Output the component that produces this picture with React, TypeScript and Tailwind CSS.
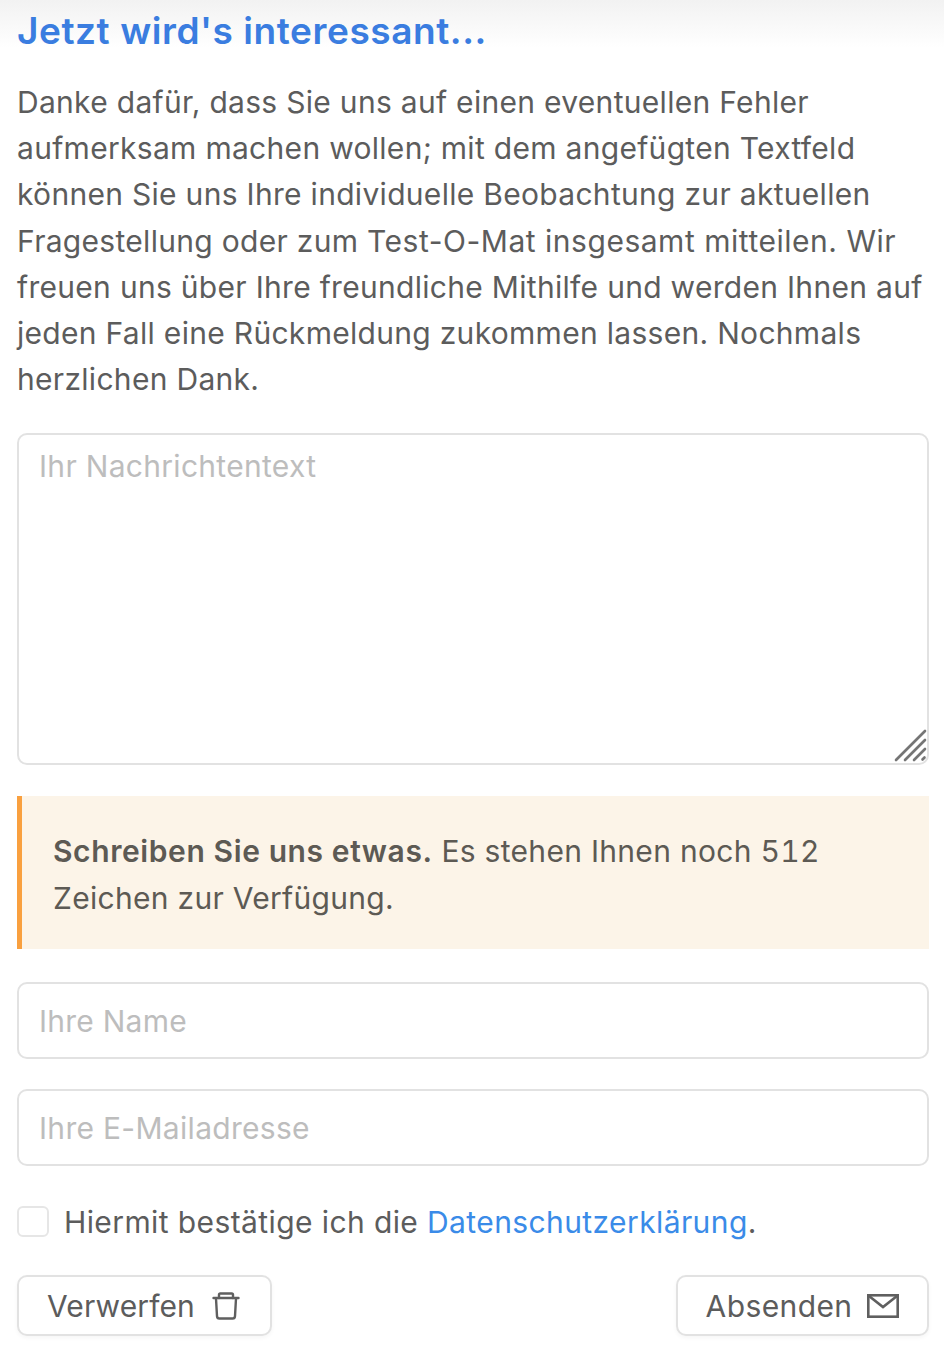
const font = { fontFamily: '"Inter", "Liberation Sans", sans-serif' };

function TrashIcon() {
  return (
    <svg width="28" height="28" viewBox="0 0 28 28" fill="none" stroke="#5f5f5f" strokeWidth="2.4" strokeLinejoin="round" strokeLinecap="round">
      <path d="M1.5 6h25" />
      <path d="M7 6V2.8c0-.7.5-1.3 1.3-1.3h11.4c.8 0 1.3.6 1.3 1.3V6" />
      <path d="M4 6.5l1 17.6c.1 1.4 1 2.4 2.4 2.4h13.2c1.4 0 2.3-1 2.4-2.4l1-17.6" />
    </svg>
  );
}

function MailIcon() {
  return (
    <svg width="32" height="24" viewBox="0 0 32 24" fill="none" stroke="#5f5f5f" strokeWidth="2.6" strokeLinejoin="miter">
      <rect x="1.3" y="1.3" width="29.4" height="21.4" />
      <path d="M2 2l14 11L30 2" />
    </svg>
  );
}

function ResizeHandle() {
  return (
    <svg className="absolute right-[1px] bottom-[2px]" width="34" height="34" viewBox="0 0 34 34" fill="none" stroke="#757575" strokeWidth="2.6" strokeLinecap="round">
      <path d="M2 31L31 2" />
      <path d="M11 31L31 11" />
      <path d="M20 31L31 20" />
      <path d="M28.5 30.5L30.5 28.5" />
    </svg>
  );
}

export default function App() {
  return (
    <div style={font} className="min-h-[1354px] w-[944px] bg-white bg-gradient-to-b from-[#f2f2f2] to-white to-[48px] bg-no-repeat px-[17px] pr-[15px] pt-[6px] text-[#5c5c5c]">
      <h2 className="text-[37px] leading-[50px] font-semibold tracking-[0.57px] text-[#3a7de0]">Jetzt wird's interessant...</h2>
      <p className="mt-[23px] text-[30px] leading-[46.2px] tracking-[0.3px]">
        Danke dafür, dass Sie uns auf einen eventuellen Fehler aufmerksam machen wollen; mit dem angefügten Textfeld können Sie uns Ihre individuelle Beobachtung zur aktuellen Fragestellung oder zum <span className="tracking-[0.52px]">Test-O-Mat insgesamt mitteilen. Wir</span> freuen uns über Ihre freundliche Mithilfe und werden Ihnen auf jeden Fall eine Rückmeldung zukommen lassen. Nochmals herzlichen Dank.
      </p>

      <div className="relative mt-[31px] h-[332px]">
        <textarea
          placeholder="Ihr Nachrichtentext"
          className="h-full w-full resize-none rounded-[10px] border-2 border-[#e2e2e2] px-[20px] py-[11px] text-[30px] leading-[40px] tracking-[0.3px] outline-none placeholder:text-[#bdbdbd]"
        />
        <ResizeHandle />
      </div>

      <div className="mt-[31px] border-l-[5px] border-[#f9a03f] bg-[#fcf4e8] pt-[32px] pr-[32px] pb-[28px] pl-[31px] text-[30px] leading-[46.4px] tracking-[0.3px] text-[#5d5a54]">
        <strong className="font-semibold tracking-[0.6px]">Schreiben Sie uns etwas.</strong> Es stehen Ihnen noch <span className="tabular-nums">512</span> Zeichen zur Verfügung.
      </div>

      <input
        placeholder="Ihre Name"
        className="mt-[33px] block h-[77px] w-full rounded-[10px] border-2 border-[#e2e2e2] px-[20px] text-[30px] tracking-[0.25px] outline-none placeholder:text-[#bdbdbd]"
      />
      <input
        placeholder="Ihre E-Mailadresse"
        className="mt-[30px] block h-[77px] w-full rounded-[10px] border-2 border-[#e2e2e2] px-[20px] text-[30px] tracking-[0.3px] outline-none placeholder:text-[#bdbdbd]"
      />

      <label className="mt-[40px] flex h-[31px] items-center gap-[15px] text-[30px] tracking-[0.4px]">
        <span className="h-[31px] w-[32px] rounded-[6px] border-2 border-[#e6e6e6] bg-white" />
        <span className="pt-[2px]">
          Hiermit bestätige ich die <span className="text-[#3a8be8]">Datenschutzerklärung</span>.
        </span>
      </label>

      <div className="mt-[38px] flex justify-between">
        <button className="flex h-[61px] w-[255px] items-center justify-center gap-[17px] rounded-[10px] border-2 border-[#e2e2e2] bg-white pr-[2px] text-[30px] tracking-[0.1px] shadow-[0_2px_4px_rgba(0,0,0,0.04)]">
          <span className="pt-[2px]">Verwerfen</span> <TrashIcon />
        </button>
        <button className="flex h-[61px] w-[253px] items-center justify-center gap-[15px] rounded-[10px] border-2 border-[#e2e2e2] bg-white text-[30px] tracking-[0.4px] shadow-[0_2px_4px_rgba(0,0,0,0.04)]">
          <span className="pt-[2px]">Absenden</span> <MailIcon />
        </button>
      </div>
    </div>
  );
}
